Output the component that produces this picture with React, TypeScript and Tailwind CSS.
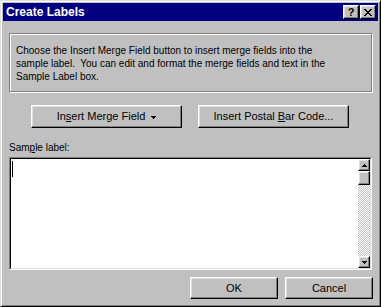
import React from "react";

const raised =
  "border border-t-white border-l-white border-r-black border-b-black shadow-[inset_-1px_-1px_0_#808080,inset_1px_1px_0_#dfdfdf] bg-[#c0c0c0]";

const font = { fontFamily: '"Liberation Sans", Arial, sans-serif' };

const Arrow: React.FC<{ up?: boolean }> = ({ up }) => (
  <svg width="5" height="3" viewBox="0 0 5 3" shapeRendering="crispEdges">
    <polygon points={up ? "2.5,0 5,3 0,3" : "0,0 5,0 2.5,3"} fill="#000" />
  </svg>
);

const Button: React.FC<{ className?: string; children: React.ReactNode }> = ({ className, children }) => (
  <button className={`${raised} flex items-center justify-center text-[11px] text-black ${className ?? ""}`}>
    {children}
  </button>
);

export default function App() {
  return (
    <div
      className="w-[381px] h-[307px] bg-[#c0c0c0] border border-t-[#dfdfdf] border-l-[#dfdfdf] border-r-black border-b-black shadow-[inset_1px_1px_0_#fff,inset_-1px_-1px_0_#808080] p-[2px] flex flex-col"
      style={font}
    >
      {/* title bar */}
      <div className="h-[18px] bg-[#000080] flex items-center justify-between pl-[3px] pr-[2px]">
        <span className="text-white font-bold text-[12px] leading-none">Create Labels</span>
        <div className="flex items-center">
          <div className={`${raised} w-[16px] h-[14px] flex items-center justify-center`}>
            <span className="text-[11px] font-bold leading-none text-black">?</span>
          </div>
          <div className={`${raised} w-[16px] h-[14px] ml-[1px] flex items-center justify-center`}>
            <svg width="8" height="7" viewBox="0 0 8 7" shapeRendering="crispEdges">
              <path d="M0 0h2v1h-2zM6 0h2v1h-2zM1 1h2v1h-2zM5 1h2v1h-2zM2 2h4v1h-4zM3 3h2v1h-2zM2 4h4v1h-4zM1 5h2v1h-2zM5 5h2v1h-2zM0 6h2v1h-2zM6 6h2v1h-2z" fill="#000" />
            </svg>
          </div>
        </div>
      </div>

      <div className="flex flex-col px-[6px]">
        {/* info box */}
        <div className="mt-[12px] h-[59px] border border-[#808080] shadow-[1px_1px_0_#fff,inset_1px_1px_0_#fff] pl-[6px] pt-[10px] text-[10px] leading-[13px] text-black">
          <p>Choose the Insert Merge Field button to insert merge fields into the</p>
          <p>sample label.&nbsp; You can edit and format the merge fields and text in the</p>
          <p>Sample Label box.</p>
        </div>

        {/* buttons */}
        <div className="mt-[13px] flex gap-[16px] pl-[22px]">
          <Button className="w-[151px] h-[23px]">
            <span>
              In<span className="underline">s</span>ert Merge Field
            </span>
            <span className="ml-[6px] mt-[1px] flex">
              <Arrow />
            </span>
          </Button>
          <Button className="w-[151px] h-[23px]">
            <span>
              Insert Postal <span className="underline">B</span>ar Code...
            </span>
          </Button>
        </div>

        <div className="mt-[13px] text-[10px] leading-[13px] text-black">
          Sam<span className="underline">p</span>le label:
        </div>

        {/* sample textarea */}
        <div className="mt-[3px] h-[113px] border border-t-[#808080] border-l-[#808080] border-r-white border-b-white">
          <div className="h-full flex border border-t-black border-l-black border-r-[#dfdfdf] border-b-[#dfdfdf] bg-white">
            <div className="flex-1 pl-[1px] pt-[2px]">
              <div className="w-[1px] h-[16px] bg-black" />
            </div>
            <div className="w-[12px] flex flex-col">
              <div className={`${raised} h-[12px] flex items-center justify-center`}>
                <Arrow up />
              </div>
              <div className={`${raised} h-[14px]`} />
              <div className="flex-1 bg-[repeating-conic-gradient(#fff_0%_25%,#c0c0c0_0%_50%)] bg-[length:2px_2px]" />
              <div className={`${raised} h-[12px] flex items-center justify-center`}>
                <Arrow />
              </div>
            </div>
          </div>
        </div>

        {/* OK / Cancel */}
        <div className="mt-[7px] flex justify-end gap-[7px] -mr-[1px]">
          <Button className="w-[88px] h-[22px]">OK</Button>
          <Button className="w-[88px] h-[22px]">Cancel</Button>
        </div>
      </div>
    </div>
  );
}
